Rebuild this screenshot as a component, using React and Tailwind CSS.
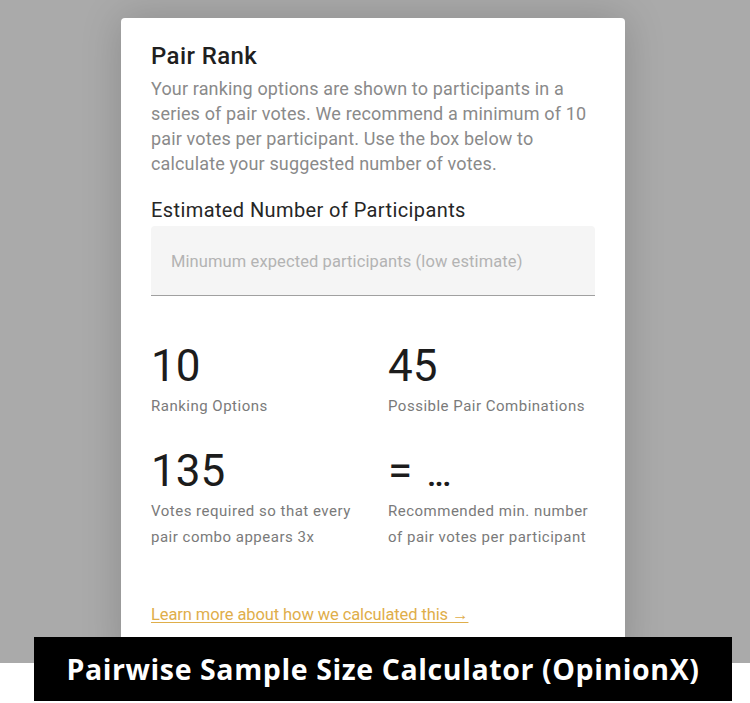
export default function App() {
  const stats = [
    { value: '10', label: ['Ranking Options'] },
    { value: '45', label: ['Possible Pair Combinations'] },
    { value: '135', label: ['Votes required so that every', 'pair combo appears 3x'] },
    { value: '=', dots: true, label: ['Recommended min. number', 'of pair votes per participant'] }
  ]

  return (
    <div className="relative w-[750px] h-[703px] bg-white overflow-hidden" style={{ fontFamily: 'Roboto, "Liberation Sans", sans-serif' }}>
      <div className="h-[663px] bg-[#aaaaaa] flex justify-center pt-[18px]">
        <div className="w-[504px] ml-[-4px] bg-white rounded-t-[4px] shadow-[0_0_40px_rgba(0,0,0,0.18)] px-[30px] pt-[23px]">
          <h1 className="text-[24px] leading-[30px] font-medium text-[#1f1f1f] tracking-[0.4px]">Pair Rank</h1>
          <p className="mt-[5px] text-[18px] leading-[25px] text-[#8a8a8a] tracking-[0.15px]">
            Your ranking options are shown to participants in a series of pair votes. We recommend a minimum of 10 pair votes per participant. Use the box below to calculate your suggested number of votes.
          </p>

          <h2 className="mt-[21px] text-[20px] leading-[26px] text-[#262626] tracking-[0.4px]">Estimated Number of Participants</h2>
          <div className="mt-[3px] w-[444px] h-[70px] bg-[#f5f5f5] rounded-t-[4px] border-b border-[#a0a0a0] flex items-center px-[20px]">
            <span className="text-[16.5px] text-[#b3b3b3] pt-[3px] tracking-[0.1px]">Minumum expected participants (low estimate)</span>
          </div>

          <div className="mt-[46px] grid grid-cols-[237px_1fr] gap-y-[28px]">
            {stats.map((s) => (
              <div key={s.value}>
                <div className="h-[48px] text-[44px] leading-[48px] text-[#1c1c1c] flex items-baseline">
                  <span>{s.value}</span>
                  {s.dots && <span className="ml-[15px] text-[30px] font-bold tracking-[-1px]">...</span>}
                </div>
                <div className="mt-[3px] text-[15px] leading-[26px] text-[#7a7a7a] tracking-[0.5px]">
                  {s.label.map((l) => (
                    <div key={l}>{l}</div>
                  ))}
                </div>
              </div>
            ))}
          </div>

          <a href="#" className="block mt-[53px] text-[16.5px] text-[#dfae4a] underline underline-offset-2 tracking-[-0.1px]">
            Learn more about how we calculated this →
          </a>
        </div>
      </div>

      <div className="absolute left-[34px] top-[637px] w-[698px] h-[64px] bg-black flex items-center justify-center">
        <span className="text-white text-[28.5px] font-bold tracking-[0.6px]" style={{ fontFamily: '"Open Sans", sans-serif' }}>
          Pairwise Sample Size Calculator (OpinionX)
        </span>
      </div>
    </div>
  )
}
